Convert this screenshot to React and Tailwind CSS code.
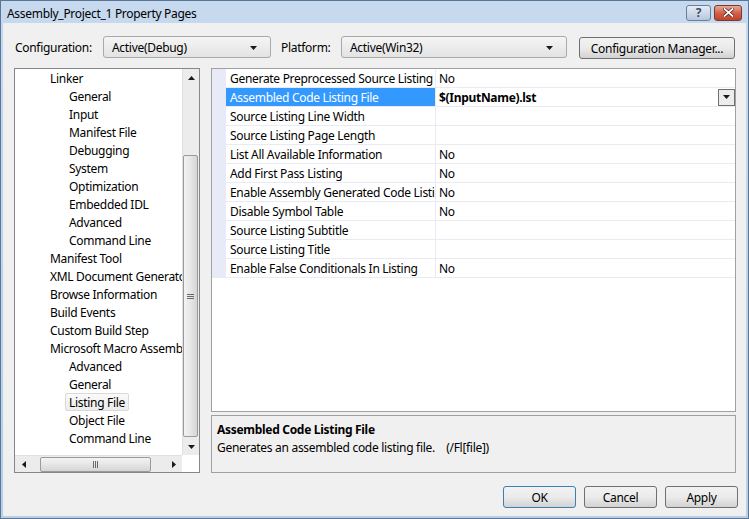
import React from "react";

const treeItems = [
  ["Linker", 0],
  ["General", 1],
  ["Input", 1],
  ["Manifest File", 1],
  ["Debugging", 1],
  ["System", 1],
  ["Optimization", 1],
  ["Embedded IDL", 1],
  ["Advanced", 1],
  ["Command Line", 1],
  ["Manifest Tool", 0],
  ["XML Document Generator", 0],
  ["Browse Information", 0],
  ["Build Events", 0],
  ["Custom Build Step", 0],
  ["Microsoft Macro Assembler", 0],
  ["Advanced", 1],
  ["General", 1],
  ["Listing File", 1, true],
  ["Object File", 1],
  ["Command Line", 1],
];

const props = [
  ["Generate Preprocessed Source Listing", "No"],
  ["Assembled Code Listing File", "$(InputName).lst", true],
  ["Source Listing Line Width", ""],
  ["Source Listing Page Length", ""],
  ["List All Available Information", "No"],
  ["Add First Pass Listing", "No"],
  ["Enable Assembly Generated Code Listing", "No"],
  ["Disable Symbol Table", "No"],
  ["Source Listing Subtitle", ""],
  ["Source Listing Title", ""],
  ["Enable False Conditionals In Listing", "No"],
];

function Arrow({ dir = "down" }) {
  const pts = {
    down: "0,0 7,0 3.5,4",
    up: "0,4 7,4 3.5,0",
    left: "4,0 4,7 0,3.5",
    right: "0,0 0,7 4,3.5",
  }[dir];
  const w = dir === "left" || dir === "right" ? 4 : 7;
  const h = dir === "left" || dir === "right" ? 7 : 4;
  return (
    <svg width={w} height={h} viewBox={`0 0 ${w} ${h}`}>
      <polygon points={pts} fill="#1a1a1a" />
    </svg>
  );
}

function Combo({ text, w }) {
  return (
    <div
      className={`${w} h-[22px] flex items-center justify-between pl-[8px] pr-[13px] pt-[1px] rounded-[3px] border border-[#a9a9a9] bg-gradient-to-b from-[#f5f5f5] to-[#e3e3e3]`}
    >
      <span>{text}</span>
      <Arrow />
    </div>
  );
}

function Button({ children, w, def }) {
  return (
    <div
      className={`${w} h-[22px] flex items-center justify-center pt-[1px] rounded-[3px] border ${
        def ? "border-[#3c7fb1]" : "border-[#707070]"
      } bg-gradient-to-b from-[#f2f2f2] via-[#ebebeb] to-[#d2d2d2]`}
    >
      {children}
    </div>
  );
}

export default function App() {
  return (
    <div className="w-[749px] h-[519px] flex flex-col bg-gradient-to-b from-[#c6d9ee] to-[#b9cfe6] border border-[#5a7896] text-[12px] tracking-[-0.3px] text-black font-['Noto_Sans',sans-serif] leading-none overflow-hidden">
      {/* Title bar */}
      <div className="h-[22px] shrink-0 flex items-center justify-between pl-[6px] pr-[6px]">
        <span className="text-[12px] mt-[3px]">Assembly_Project_1 Property Pages</span>
        <div className="flex items-center gap-[3px] mt-[1px]">
          <div className="w-[25px] h-[16px] rounded-[3px] border border-[#6d7f95] bg-gradient-to-b from-[#e4edf7] to-[#b5c7dd] flex items-center justify-center text-[12px] font-bold text-[#3d4d63]">
            ?
          </div>
          <div className="w-[28px] h-[16px] rounded-[3px] border border-[#7a3a2e] bg-gradient-to-b from-[#e9a898] via-[#d3604a] to-[#c0442c] flex items-center justify-center">
            <svg width="11" height="9" viewBox="0 0 11 9">
              <path d="M1.5 1 L9.5 8 M9.5 1 L1.5 8" stroke="#4a1a10" strokeWidth="3.2" strokeLinecap="square" />
              <path d="M1.5 1 L9.5 8 M9.5 1 L1.5 8" stroke="#ffffff" strokeWidth="1.8" strokeLinecap="square" />
            </svg>
          </div>
        </div>
      </div>

      {/* Client */}
      <div className="flex-1 mx-[2px] mb-[2px] bg-[#f0f0f0] border-l border-[#e6eef8] flex flex-col pl-[10px]">
        {/* Config row */}
        <div className="h-[23px] mt-[13px] flex items-start">
          <span className="mt-[6px] ml-[1px] w-[88px]">Configuration:</span>
          <Combo text="Active(Debug)" w="w-[168px]" />
          <span className="mt-[6px] ml-[10px] w-[60px]">Platform:</span>
          <Combo text="Active(Win32)" w="w-[226px]" />
          <div className="ml-[12px] mt-[1px]">
            <Button w="w-[156px]">Configuration Manager...</Button>
          </div>
        </div>

        {/* Main */}
        <div className="mt-[9px] flex gap-[11px]">
          {/* Tree */}
          <div className="w-[186px] h-[405px] border border-[#828790] bg-white flex flex-col">
            <div className="flex flex-1 min-h-0">
              <div className="flex-1 overflow-hidden">
                {treeItems.map(([t, lvl, sel], i) => (
                  <div key={i} className={`h-[18px] flex items-center pt-[1px] whitespace-nowrap ${lvl ? "pl-[54px]" : "pl-[35px]"}`}>
                    {sel ? (
                      <span className="-ml-[4px] px-[3px] h-[18px] -mt-[1px] pt-[1px] flex items-center border border-[#d9d9d9] rounded-[2px] bg-gradient-to-b from-[#fafafa] to-[#ececec]">
                        {t}
                      </span>
                    ) : (
                      <span>{t}</span>
                    )}
                  </div>
                ))}
              </div>
              {/* vertical scrollbar */}
              <div className="w-[17px] bg-[#ececec] border-l border-[#e0e0e0] flex flex-col items-center">
                <div className="h-[17px] flex items-center justify-center">
                  <Arrow dir="up" />
                </div>
                <div className="flex-1 w-full relative">
                  <div className="absolute left-[0px] right-[1px] top-[69px] h-[282px] rounded-[2px] border border-[#9a9a9a] bg-gradient-to-r from-[#f3f3f3] via-[#e6e6e6] to-[#d5d5d5] flex items-center justify-center">
                    <svg width="7" height="7" viewBox="0 0 7 7">
                      <path d="M0 1.5 H7 M0 3.5 H7 M0 5.5 H7" stroke="#6a6a6a" strokeWidth="1" />
                    </svg>
                  </div>
                </div>
                <div className="h-[17px] flex items-center justify-center">
                  <Arrow dir="down" />
                </div>
              </div>
            </div>
            {/* horizontal scrollbar */}
            <div className="h-[17px] flex">
              <div className="flex-1 bg-[#ececec] border-t border-[#e0e0e0] flex items-center">
                <div className="w-[17px] flex items-center justify-center">
                  <Arrow dir="left" />
                </div>
                <div className="flex-1 h-full relative">
                  <div className="absolute top-[1px] bottom-[0px] left-[8px] w-[111px] rounded-[2px] border border-[#9a9a9a] bg-gradient-to-b from-[#f3f3f3] via-[#e6e6e6] to-[#d5d5d5] flex items-center justify-center">
                    <svg width="7" height="7" viewBox="0 0 7 7">
                      <path d="M1.5 0 V7 M3.5 0 V7 M5.5 0 V7" stroke="#6a6a6a" strokeWidth="1" />
                    </svg>
                  </div>
                </div>
                <div className="w-[17px] flex items-center justify-center">
                  <Arrow dir="right" />
                </div>
              </div>
              <div className="w-[17px] bg-white" />
            </div>
          </div>

          {/* Right side */}
          <div className="w-[525px] flex flex-col gap-[3px]">
            <div className="h-[344px] border border-[#a0a0a0] bg-white flex flex-col">
              {props.map(([n, v, sel], i) => (
                <div key={i} className="h-[19px] flex border-b border-[#e8ebf3]">
                  <div className="w-[14px] bg-[#e8ebf7]" />
                  <div
                    className={`w-[210px] flex items-center pl-[4px] pt-[1px] whitespace-nowrap overflow-hidden border-r border-[#e8ebf3] ${
                      sel ? "bg-[#3399ff] text-white" : ""
                    }`}
                  >
                    {n}
                  </div>
                  <div className={`flex-1 flex items-center justify-between pl-[3px] ${sel ? "font-bold" : ""}`}>
                    <span className="pt-[1px]">{v}</span>
                    {sel && (
                      <div className="w-[17px] h-[17px] border border-[#707070] bg-[#ececec] flex items-center justify-center">
                        <Arrow />
                      </div>
                    )}
                  </div>
                </div>
              ))}
              <div className="flex-1" />
            </div>
            <div className="h-[58px] border border-[#a0a0a0] bg-[#f0f0f0] pl-[5px] pt-[5px]">
              <div className="font-bold h-[18px] flex items-center">Assembled Code Listing File</div>
              <div className="h-[18px] flex items-center whitespace-pre">
                {"Generates an assembled code listing file.    (/Fl[file])"}
              </div>
            </div>
          </div>
        </div>

        {/* Buttons */}
        <div className="mt-[13px] flex justify-end gap-[8px] pr-[8px]">
          <Button w="w-[73px]" def>
            OK
          </Button>
          <Button w="w-[73px]">Cancel</Button>
          <Button w="w-[73px]">Apply</Button>
        </div>
      </div>
    </div>
  );
}
